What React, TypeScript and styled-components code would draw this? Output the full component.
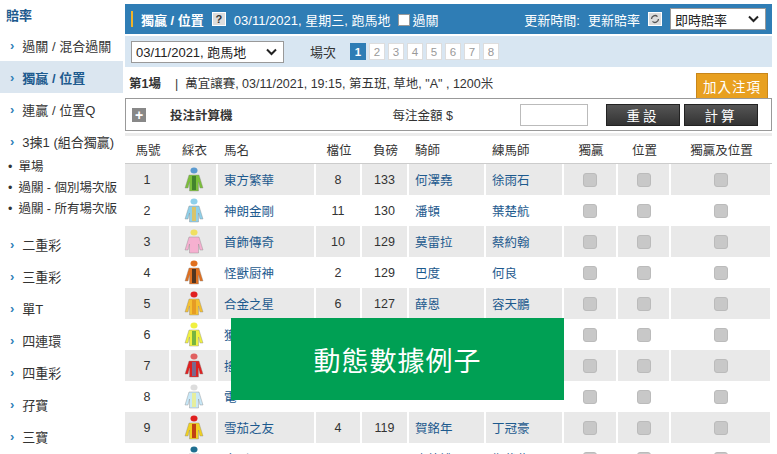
import React from "react";
import styled, { createGlobalStyle } from "styled-components";

const G = createGlobalStyle`
  body { margin: 0; font-family: "Liberation Sans", "Noto Sans CJK TC", sans-serif; font-size: 13px; color: #333; background: #fff; }
  * { box-sizing: border-box; }
`;
const Page = styled.div`display: flex; width: 777px; height: 454px; overflow: hidden; position: relative;`;
const Side = styled.div`width: 123px; flex-shrink: 0; padding-top: 2px;`;
const SideTitle = styled.div`color: #1d5a8e; font-weight: bold; padding: 3px 6px 0; height: 27px; font-size: 13px;`;
const SideItem = styled.div<{ $sel?: boolean; $h?: number }>`
  height: ${p => p.$h ?? 32}px; display: flex; align-items: center; padding-left: 10px; gap: 8px;
  background: ${p => (p.$sel ? "#dbe6f0" : "transparent")};
  color: ${p => (p.$sel ? "#1d5a8e" : "#333")}; font-weight: ${p => (p.$sel ? "bold" : "normal")};
  &::before { content: "›"; color: #2f7fb7; font-weight: bold; font-size: 13px; }
`;
const Sub = styled.div`padding-left: 8px; font-size: 12.5px; line-height: 21px; &::before{content:"•"; margin-right:6px;}`;
const SubBox = styled.div`padding: 0 0 8px;`;
const Main = styled.div`flex: 1; padding: 4px 5px 0 2px; display: flex; flex-direction: column; & > * { flex-shrink: 0; }`;
const Head = styled.div`height: 30px; background: #2f7db5; color: #fff; display: flex; align-items: center; padding: 0 6px; gap: 8px; font-size: 13px;`;
const Bar = styled.span`width: 2px; height: 16px; background: #f0b429;`;
const Q = styled.span`width: 14px; height: 14px; background: #ddd; color: #333; border: 1px solid #fff; font-size: 11px; font-weight: bold; display: inline-flex; align-items: center; justify-content: center;`;
const Chk = styled.span`width: 12px; height: 12px; background: #fff; border: 1px solid #999; display: inline-block; margin-right: 2px; vertical-align: -1px;`;
const Spacer = styled.div`flex: 1;`;
const Sel = styled.div<{ $w: number }>`width: ${p => p.$w}px; height: 22px; background: #fff; border: 1px solid #999; color: #222; display: flex; align-items: center; justify-content: space-between; padding: 0 6px 0 4px; font-size: 13px;`;
const Row2 = styled.div`height: 31px; margin-top: 2px; background: #d8e6f2; display: flex; align-items: center; padding: 0 6px; gap: 6px;`;
const Nums = styled.div`display: flex; gap: 3px; margin-left: 8px;`;
const Num = styled.span<{ $on?: boolean }>`width: 16px; height: 17px; display: inline-flex; align-items: center; justify-content: center; font-size: 11.5px;
  background: ${p => (p.$on ? "#2f7db5" : "#fff")}; color: ${p => (p.$on ? "#fff" : "#999")}; border: 1px solid ${p => (p.$on ? "#2f7db5" : "#ddd")}; font-weight: ${p=>p.$on?"bold":"normal"};`;
const Info = styled.div`height: 29px; display: flex; align-items: flex-start; padding: 6px 4px 0; font-size: 12.5px; gap: 14px;`;
const AddBtn = styled.span`margin-left: auto; background: #e8a020; border: 1px solid #c8861a; color: #fff; font-size: 13.5px; letter-spacing: 1px; padding: 2px 6px; margin-top: 0;`;
const Calc = styled.div`height: 33px; border: 1px solid #999; display: flex; align-items: center; padding: 0 6px; font-size: 12.5px; font-weight: bold; margin-top: 2px;`;
const Plus = styled.span`width: 14px; height: 14px; background: #888; color: #fff; display: inline-flex; align-items: center; justify-content: center; font-size: 14px; margin-right: 24px;`;
const Input = styled.span`width: 68px; height: 22px; border: 1px solid #bbb; margin-left: 67px; margin-right: 14px;`;
const DarkBtn = styled.span`width: 74px; height: 22px; background: linear-gradient(#555, #333); color: #fff; display: inline-flex; align-items: center; justify-content: center; font-weight: normal; letter-spacing: 3px; margin-left: 4px; font-size: 13.5px; border: 1px solid #222;`;
const Table = styled.div`margin-top: 2px; border-top: 3px solid #ececec;`;
const Grid = styled.div<{ $odd?: boolean; $head?: boolean }>`
  display: grid; grid-template-columns: 46px 47px 98px 46px 47px 77px 78px 54px 53px 1fr;
  height: ${p => (p.$head ? 28 : 31)}px;
  background: ${p => (p.$odd ? "#e9e9e9" : "#fff")};
  border-bottom: ${p => (p.$head ? "1px solid #ccc" : "none")};
  & > div { display: flex; align-items: center; border-right: ${p => (p.$head ? "none" : "2px solid #fff")}; font-size: 12.5px; }
`;
const C = styled.div<{ $l?: boolean; $blue?: boolean }>`justify-content: ${p => (p.$l ? "flex-start" : "center")}; padding-left: ${p => (p.$l ? 6 : 0)}px; color: ${p => (p.$blue ? "#1d5a8e" : "#333")};`;
const Box = styled.span`width: 14px; height: 14px; border-radius: 3px; background: #c8c8c8; border: 1px solid #bbb;`;
const Overlay = styled.div`position: absolute; left: 231px; top: 318px; width: 333px; height: 82px; background: #00a054; color: #fff; font-size: 27px; display: flex; align-items: center; justify-content: center; letter-spacing: 1px;`;

const Caret = () => (<svg width="11" height="8" viewBox="0 0 11 8"><path d="M1 1.5l4.5 4.5L10 1.5" stroke="#222" strokeWidth="2" fill="none"/></svg>);
const Refresh = () => (<svg width="14" height="14" viewBox="0 0 14 14"><rect x="0.5" y="0.5" width="13" height="13" fill="#ddd" stroke="#fff"/><path d="M3.5 7a3.5 3.5 0 0 1 6-2.4M10.5 7a3.5 3.5 0 0 1-6 2.4" stroke="#555" strokeWidth="1.3" fill="none"/></svg>);
const Silk = ({ a, b, c }: { a: string; b: string; c: string }) => (
  <svg width="20" height="25" viewBox="0 0 20 25">
    <ellipse cx="10" cy="3.5" rx="3.5" ry="3" fill={c} />
    <path d="M5 8h10l4 13h-3l-1.5-6v9h-9v-9L4 21H1z" fill={a} stroke="#888" strokeWidth="0.4" />
    <path d="M8 9h4v14H8z" fill={b} opacity="0.75" />
  </svg>
);

const rows = [
  ["1", "東方繁華", "8", "133", "何澤堯", "徐雨石", "#7bbf3a", "#2f6f2a", "#5a9ad0"],
  ["2", "神朗金剛", "11", "130", "潘頓", "葉楚航", "#8fd0ea", "#f0c040", "#8fd0ea"],
  ["3", "首飾傳奇", "10", "129", "莫雷拉", "蔡約翰", "#f5b0d0", "#f5b0d0", "#f0e060"],
  ["4", "怪獸厨神", "2", "129", "巴度", "何良", "#e07020", "#222", "#e07020"],
  ["5", "合金之星", "6", "127", "薛恩", "容天鵬", "#f5c030", "#e09020", "#e02020"],
  ["6", "獲", "", "", "", "", "#f0f040", "#50a040", "#f0f040"],
  ["7", "搖", "", "", "", "", "#e02020", "#5a80b0", "#e06060"],
  ["8", "電", "", "", "", "", "#c8e8f8", "#f0f080", "#ddd"],
  ["9", "雪茄之友", "4", "119", "賀銘年", "丁冠豪", "#f0d020", "#b01010", "#e02020"],
  ["10", "金剛石", "12", "118", "班德禮", "鄭俊偉", "#c02030", "#1f4f90", "#1f6f90"],
];

export default function App() {
  return (
    <Page>
      <G />
      <Side>
        <SideTitle>賠率</SideTitle>
        <SideItem>過關 / 混合過關</SideItem>
        <SideItem $sel>獨贏 / 位置</SideItem>
        <SideItem>連贏 / 位置Q</SideItem>
        <SideItem>3揀1 (組合獨贏)</SideItem>
        <SubBox>
          <Sub>單場</Sub>
          <Sub>過關 - 個別場次版</Sub>
          <Sub>過關 - 所有場次版</Sub>
        </SubBox>
        <SideItem>二重彩</SideItem>
        <SideItem>三重彩</SideItem>
        <SideItem>單T</SideItem>
        <SideItem>四連環</SideItem>
        <SideItem>四重彩</SideItem>
        <SideItem>孖寶</SideItem>
        <SideItem>三寶</SideItem>
      </Side>
      <Main>
        <Head>
          <Bar />
          <b>獨贏 / 位置</b>
          <Q>?</Q>
          <span>03/11/2021, 星期三, 跑馬地</span>
          <span><Chk />過關</span>
          <Spacer />
          <span>更新時間:</span>
          <span>更新賠率</span>
          <Refresh />
          <Sel $w={96}>即時賠率<Caret /></Sel>
        </Head>
        <Row2>
          <Sel $w={153}>03/11/2021, 跑馬地<Caret /></Sel>
          <span style={{ marginLeft: 20 }}>場次</span>
          <Nums>{[1,2,3,4,5,6,7,8].map(n => <Num key={n} $on={n===1}>{n}</Num>)}</Nums>
        </Row2>
        <Info>
          <b>第1場</b>
          <span>|&nbsp;&nbsp;萬宜讓賽, 03/11/2021, 19:15, 第五班, 草地, "A" , 1200米</span>
          <AddBtn>加入注項</AddBtn>
        </Info>
        <Calc>
          <Plus>+</Plus>
          <span>投注計算機</span>
          <span style={{ marginLeft: 160, fontWeight: "normal" }}>每注金額 $</span>
          <Input />
          <DarkBtn>重設</DarkBtn>
          <DarkBtn>計算</DarkBtn>
        </Calc>
        <Table>
          <Grid $head>
            <C>馬號</C><C>綵衣</C><C $l>馬名</C><C>檔位</C><C>負磅</C><C $l>騎師</C><C $l>練馬師</C><C>獨贏</C><C>位置</C><C>獨贏及位置</C>
          </Grid>
          {rows.map((r, i) => (
            <Grid key={r[0]} $odd={i % 2 === 0}>
              <C>{r[0]}</C>
              <C><Silk a={r[6]} b={r[7]} c={r[8]} /></C>
              <C $l $blue>{r[1]}</C>
              <C>{r[2]}</C>
              <C>{r[3]}</C>
              <C $l $blue>{r[4]}</C>
              <C $l $blue>{r[5]}</C>
              <C><Box /></C><C><Box /></C><C><Box /></C>
            </Grid>
          ))}
        </Table>
      </Main>
      <Overlay>動態數據例子</Overlay>
    </Page>
  );
}
